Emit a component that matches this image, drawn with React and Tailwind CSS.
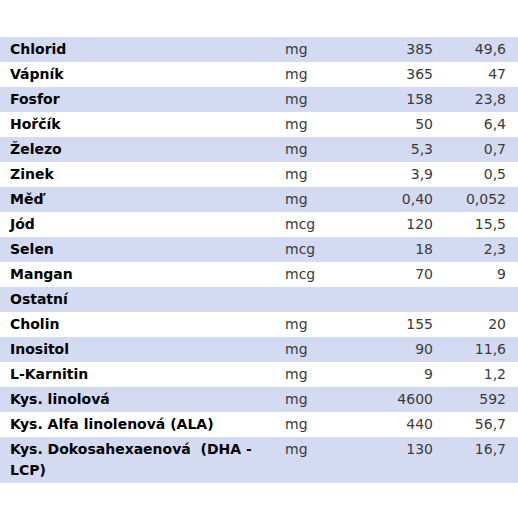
import React from 'react';

const rows = [
  { name: 'Chlorid', unit: 'mg', a: '385', b: '49,6' },
  { name: 'Vápník', unit: 'mg', a: '365', b: '47' },
  { name: 'Fosfor', unit: 'mg', a: '158', b: '23,8' },
  { name: 'Hořčík', unit: 'mg', a: '50', b: '6,4' },
  { name: 'Železo', unit: 'mg', a: '5,3', b: '0,7' },
  { name: 'Zinek', unit: 'mg', a: '3,9', b: '0,5' },
  { name: 'Měď', unit: 'mg', a: '0,40', b: '0,052' },
  { name: 'Jód', unit: 'mcg', a: '120', b: '15,5' },
  { name: 'Selen', unit: 'mcg', a: '18', b: '2,3' },
  { name: 'Mangan', unit: 'mcg', a: '70', b: '9' },
  { name: 'Ostatní', unit: '', a: '', b: '' },
  { name: 'Cholin', unit: 'mg', a: '155', b: '20' },
  { name: 'Inositol', unit: 'mg', a: '90', b: '11,6' },
  { name: 'L-Karnitin', unit: 'mg', a: '9', b: '1,2' },
  { name: 'Kys. linolová', unit: 'mg', a: '4600', b: '592' },
  { name: 'Kys. Alfa linolenová (ALA)', unit: 'mg', a: '440', b: '56,7' },
  { name: 'Kys. Dokosahexaenová  (DHA - LCP)', unit: 'mg', a: '130', b: '16,7' },
];

const App = () => {
  return (
    <div className="w-[518px] h-[518px] bg-white pt-[37px] font-['DejaVu_Sans',sans-serif]">
      {rows.map((row, i) => (
        <div
          key={row.name}
          className={`flex items-start min-h-[25px] py-[2px] ${i % 2 === 0 ? 'bg-[#d5daf3]' : 'bg-white'}`}
        >
          <div className="w-[285px] pl-[10px] pr-[20px] text-[14px] leading-[21px] font-bold text-black whitespace-pre-wrap">
            {row.name}
          </div>
          <div className="w-[90px] text-[14px] leading-[21px] text-[#3a3a3a]">{row.unit}</div>
          <div className="w-[58px] text-right text-[14px] leading-[21px] text-[#3a3a3a]">{row.a}</div>
          <div className="w-[73px] text-right text-[14px] leading-[21px] text-[#3a3a3a]">{row.b}</div>
        </div>
      ))}
    </div>
  );
};

export default App;
